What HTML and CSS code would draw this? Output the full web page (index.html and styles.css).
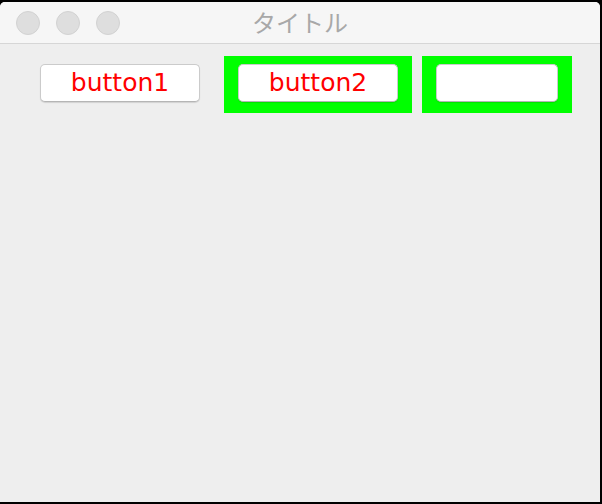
FILE: index.html
```html
<!DOCTYPE html>
<html>
<head>
<meta charset="utf-8">
<link rel="stylesheet" href="styles.css">
</head>
<body>
<div class="window">
  <div class="titlebar">
    <div class="lights">
      <span class="light"></span>
      <span class="light"></span>
      <span class="light"></span>
    </div>
    <div class="title">タイトル</div>
  </div>
  <div class="content">
    <div class="cell"><button class="btn">button1</button></div>
    <div class="cell green"><button class="btn">button2</button></div>
    <div class="cell green"><button class="btn narrow"></button></div>
  </div>
</div>
</body>
</html>
```
FILE: styles.css
```css
html, body {
  margin: 0;
  padding: 0;
  background: #000;
}
body {
  padding: 2px 2px 2px 0;
  font-family: "DejaVu Sans", "Noto Sans CJK JP", sans-serif;
}
.window {
  width: 600px;
  height: 500px;
  background: #eeeeee;
  border-radius: 5px 5px 0 0;
  overflow: hidden;
}
.titlebar {
  position: relative;
  height: 41px;
  background: #f6f6f6;
  border-bottom: 1px solid #d6d6d6;
  display: flex;
  align-items: center;
}
.lights {
  display: flex;
  gap: 16px;
  padding-left: 16px;
}
.light {
  width: 22px;
  height: 22px;
  border-radius: 50%;
  background: #dedede;
  border: 1px solid #d2d2d2;
}
.title {
  position: absolute;
  left: 0;
  right: 0;
  top: 0;
  bottom: 2px;
  display: flex;
  align-items: center;
  justify-content: center;
  font-family: "Noto Sans CJK JP", sans-serif;
  font-size: 24px;
  color: #a8a8a8;
}
.content {
  display: flex;
  gap: 10px;
  padding: 12px 0 0 26px;
  align-items: flex-start;
}
.cell {
  padding: 8px 14px 11px;
}
.green {
  background: #00ff00;
}
.btn {
  display: block;
  width: 160px;
  height: 38px;
  margin: 0;
  padding: 0;
  background: #fff;
  border: 1px solid #cbcbcb;
  border-bottom-color: #b5b5b5;
  border-radius: 5px;
  box-shadow: 0 1px 1px rgba(0,0,0,0.12);
  color: #ff0000;
  font-family: "DejaVu Sans", sans-serif;
  font-size: 25px;
  line-height: 36px;
}
.btn.narrow {
  width: 122px;
}
```
